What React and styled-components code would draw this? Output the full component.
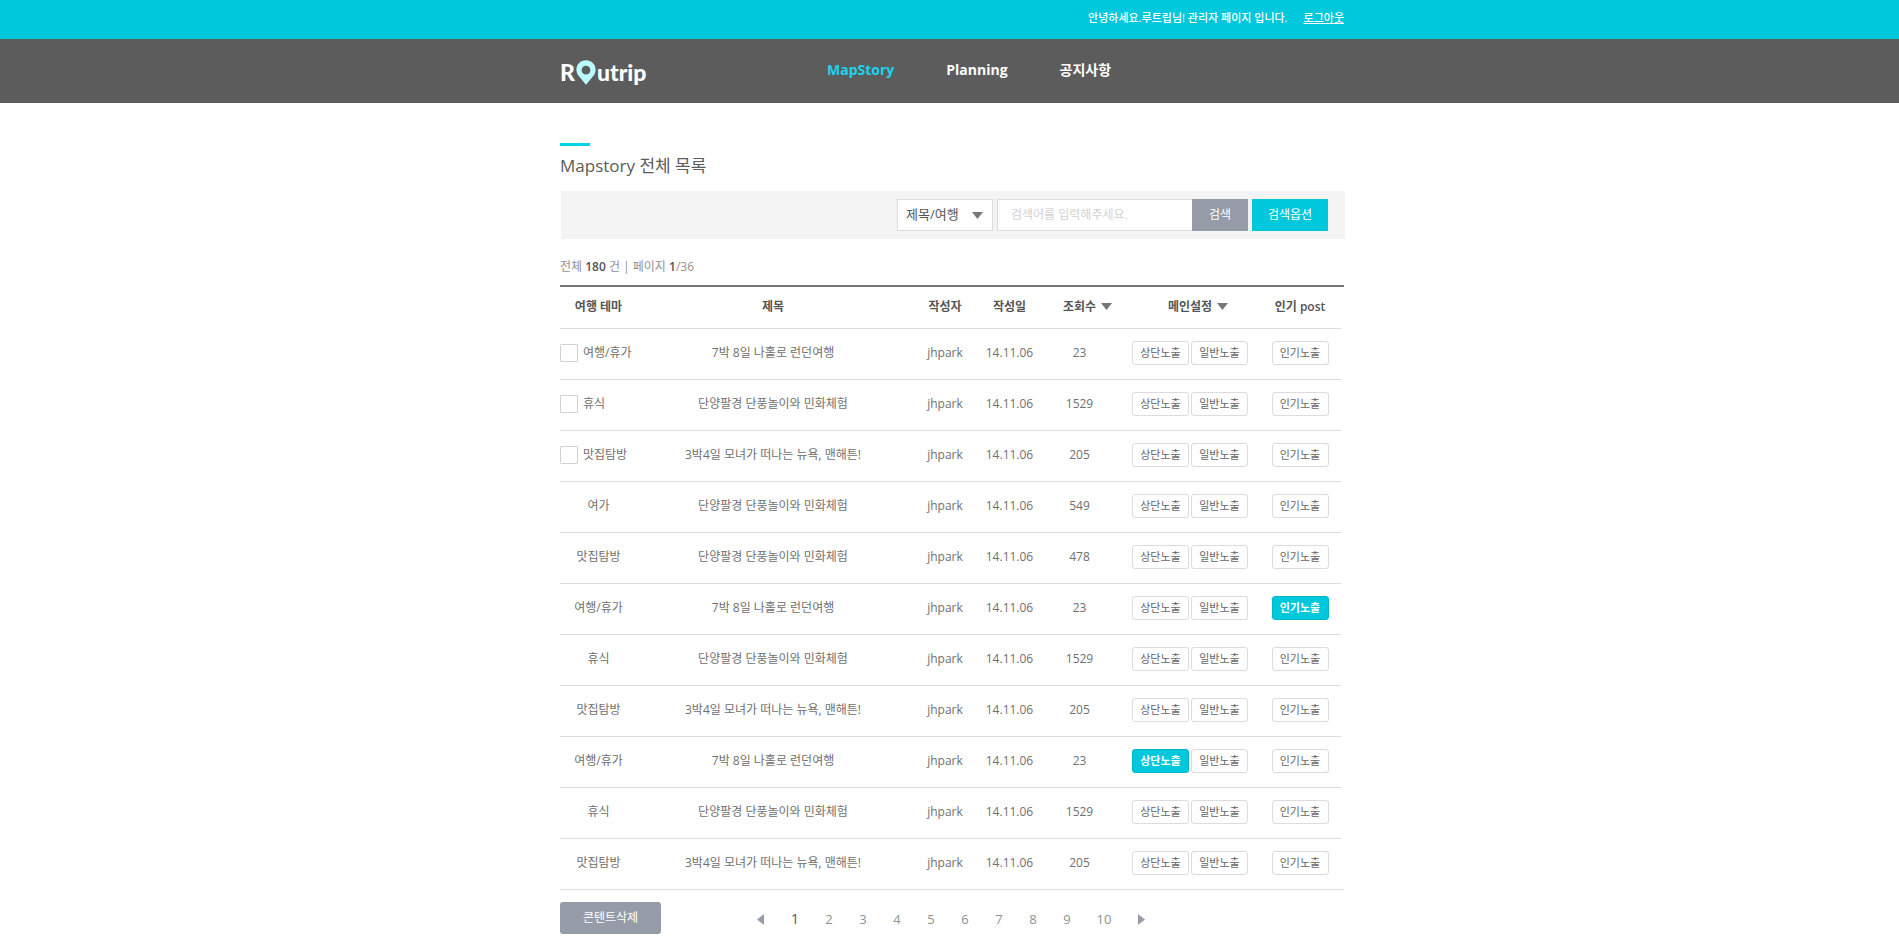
import React, { useState } from 'react';
import styled, { createGlobalStyle, css } from 'styled-components';

const Global = createGlobalStyle`
  *, *::before, *::after { box-sizing: border-box; }
  body {
    margin: 0;
    background: #fff;
    color: #707070;
    font: 12px/18px "Open Sans", "Noto Sans CJK KR", sans-serif;
  }
  button, input, select { font: inherit; margin: 0; }
  a { color: inherit; text-decoration: none; }
`;

const Container = styled.div`
  width: 100%;
  max-width: 791px;
  margin: 0 auto;
  padding-left: 6px;
`;

const TopBar = styled.div`
  background: #00c8dc;
  color: #fff;
`;

const TopBarInner = styled(Container)`
  display: flex;
  justify-content: flex-end;
  align-items: center;
  gap: 16px;
  height: 39px;
  padding-right: 1px;
  padding-bottom: 4px;
  font-size: 11px;
  font-weight: 500;
`;

const Logout = styled.a`
  text-decoration: underline;
`;

const NavBar = styled.header`
  background: #5c5c5c;
`;

const NavInner = styled(Container)`
  display: flex;
  align-items: center;
  height: 64px;
`;

const Logo = styled.a`
  display: flex;
  align-items: center;
  gap: 1px;
  width: 267px;
  color: #fff;
  font: 900 23px/26px Lato, sans-serif;
  padding-top: 2px;
`;

const Nav = styled.nav`
  display: flex;
  gap: 52px;
  padding-bottom: 2px;
  font-size: 14px;
  font-weight: 700;
  line-height: 20px;
`;

const NavLink = styled.a`
  color: ${p => (p.$active ? '#1bd4ee' : '#fff')};
`;

const Title = styled.h1`
  margin: 40px 0 0;
  color: #5c5c5c;
  font-size: 17px;
  font-weight: 400;
  line-height: 24px;

  &::before {
    content: '';
    display: block;
    width: 30px;
    height: 3px;
    margin-bottom: 8px;
    background: #00d2e6;
  }
`;

const SearchBar = styled.form`
  display: flex;
  justify-content: flex-end;
  gap: 4px;
  margin: 13px 0 0 1px;
  padding: 8px 17px 8px 8px;
  background: #f4f4f4;
`;

const SelectBox = styled.div`
  display: grid;
  align-items: center;
  width: 96px;

  & > * { grid-area: 1 / 1; }
  & > svg { justify-self: end; margin-right: 10px; pointer-events: none; }
`;

const Select = styled.select`
  appearance: none;
  width: 100%;
  height: 32px;
  padding: 0 24px 2px 8px;
  border: 1px solid #dcdcdc;
  border-radius: 0;
  background: #fff;
  color: #555;
  font-size: 13px;
`;

const SearchField = styled.div`
  display: flex;
  width: 251px;
`;

const SearchInput = styled.input`
  flex: 1;
  min-width: 0;
  height: 32px;
  padding: 0 12px 2px 13px;
  border: 1px solid #dcdcdc;
  border-right: 0;
  border-radius: 0;
  background: #fff;
  color: #555;

  &::placeholder { color: #d2d2d2; opacity: 1; }
`;

const FlatButton = styled.button`
  width: ${p => p.$width}px;
  height: 32px;
  padding: 0;
  border: 0;
  border-radius: ${p => (p.$rounded ? 3 : 0)}px;
  background: ${p => (p.$primary ? '#00c8dc' : '#959ca8')};
  color: #fff;
  cursor: pointer;
`;

const Summary = styled.p`
  margin: 19px 0 9px;
  color: #919191;

  strong { color: #555; font-weight: 600; }
`;

const TableFrame = styled.div`
  margin-right: 1px;
  padding-right: 3px;
  border-top: 2px solid #777;
  border-bottom: 1px solid #dcdcdc;
`;

const Table = styled.table`
  width: 100%;
  border-collapse: separate;
  border-spacing: 0;
  table-layout: fixed;
  text-align: center;
`;

const Col = styled.col`
  width: ${p => (p.$width ? `${p.$width}px` : 'auto')};
`;

const Th = styled.th`
  height: 42px;
  padding: 0 0 2px;
  border-bottom: 1px solid #dcdcdc;
  color: #555;
  font-weight: 600;
  white-space: nowrap;
`;

const SortButton = styled.button`
  display: inline-flex;
  align-items: center;
  gap: 5px;
  padding: 0 0 0 16px;
  border: 0;
  background: none;
  color: inherit;
  cursor: pointer;
`;

const Td = styled.td`
  height: 51px;
  padding: 0 0 2px;
  border-bottom: 1px solid #dcdcdc;
  white-space: nowrap;

  tr:last-child > & { height: 50px; border-bottom: 0; }
`;

const CheckLabel = styled.label`
  display: flex;
  align-items: center;
  gap: 5px;
`;

const Checkbox = styled.input`
  appearance: none;
  width: 18px;
  height: 18px;
  border: 1px solid #d2d2d2;
  border-radius: 1px;
  background: #fff;

  &:checked { background: #00c8dc; }
`;

const Pair = styled.div`
  display: flex;
  justify-content: center;
  gap: 2px;
`;

const Toggle = styled.button`
  width: 57px;
  height: 24px;
  padding: 0 0 1px;
  border: 1px solid #dcdcdc;
  border-radius: 3px;
  background: #fff;
  color: #666;
  font-size: 11px;
  line-height: 16px;
  cursor: pointer;

  ${p => p.$on && css`
    border-color: #00b8cc;
    background: #00c8dc;
    color: #fff;
    font-weight: 700;
  `}
`;

const Footer = styled.div`
  display: flex;
  align-items: center;
  gap: 96px;
  padding: 12px 0 2px;
`;

const Pager = styled.nav`
  display: flex;
  align-items: center;
  gap: 14px;
  padding-top: 2px;
`;

const Pages = styled.div`
  display: flex;
  align-items: baseline;
`;

const PageLink = styled.a`
  width: ${p => (p.$wide ? 40 : 34)}px;
  color: ${p => (p.$current ? '#555' : '#919191')};
  font-size: ${p => (p.$current ? 14 : 13)}px;
  text-align: center;
`;

const ArrowLink = styled.a`
  display: flex;
`;

const DownArrow = () => (
  <svg width="11" height="7" viewBox="0 0 11 7" aria-hidden="true">
    <path d="M0 0h11L5.500 7z" fill="#777" />
  </svg>
);

const SideArrow = ({ next }) => (
  <svg width="7" height="11" viewBox="0 0 7 11" aria-hidden="true">
    <path d={next ? 'M0 0v11l7-5.500z' : 'M7 0v11L0 5.500z'} fill="#959ca8" />
  </svg>
);

const Pin = () => (
  <svg width="20" height="25" viewBox="0 0 20 25" aria-hidden="true">
    <path
      fillRule="evenodd"
      fill="#b9fbff"
      d="M10 0.3C4.600 0.300 0.400 4.400 0.400 9.700c0 2.700 1.200 5 2.800 6.900L10 24.700l6.800-8.100c1.600-1.900 2.800-4.200 2.800-6.900C19.600 4.400 15.400 0.300 10 0.300zM10 5.800a4.400 4.400 0 1 1 0 8.800 4.400 4.400 0 0 1 0-8.800z"
    />
  </svg>
);

const trips = [
  { theme: '여행/휴가', title: '7박 8일 나홀로 런던여행', hits: 23 },
  { theme: '휴식', title: '단양팔경 단풍놀이와 민화체험', hits: 1529 },
  { theme: '맛집탐방', title: '3박4일 모녀가 떠나는 뉴욕, 맨해튼!', hits: 205 },
];
const [london, danyang, newYork] = trips;

const rows = [
  { ...london, check: true },
  { ...danyang, check: true },
  { ...newYork, check: true },
  { ...danyang, theme: '여가', hits: 549 },
  { ...danyang, theme: '맛집탐방', hits: 478 },
  { ...london, popular: true },
  danyang,
  newYork,
  { ...london, top: true },
  danyang,
  newYork,
];

function Row({ row }) {
  const [top, setTop] = useState(!!row.top);
  const [normal, setNormal] = useState(false);
  const [popular, setPopular] = useState(!!row.popular);
  return (
    <tr>
      <Td>
        {row.check ? (
          <CheckLabel>
            <Checkbox type="checkbox" />
            {row.theme}
          </CheckLabel>
        ) : row.theme}
      </Td>
      <Td>{row.title}</Td>
      <Td>jhpark</Td>
      <Td>14.11.06</Td>
      <Td>{row.hits}</Td>
      <Td>
        <Pair>
          <Toggle type="button" $on={top} onClick={() => setTop(!top)}>상단노출</Toggle>
          <Toggle type="button" $on={normal} onClick={() => setNormal(!normal)}>일반노출</Toggle>
        </Pair>
      </Td>
      <Td>
        <Pair>
          <Toggle type="button" $on={popular} onClick={() => setPopular(!popular)}>인기노출</Toggle>
        </Pair>
      </Td>
    </tr>
  );
}

export default function App() {
  return (
    <>
      <Global />
      <TopBar>
        <TopBarInner>
          <span>안녕하세요.루트립님! 관리자 페이지 입니다.</span>
          <Logout href="#logout">로그아웃</Logout>
        </TopBarInner>
      </TopBar>
      <NavBar>
        <NavInner>
          <Logo href="#home">
            <span>R</span>
            <Pin />
            <span>utrip</span>
          </Logo>
          <Nav>
            <NavLink href="#mapstory" $active>MapStory</NavLink>
            <NavLink href="#planning">Planning</NavLink>
            <NavLink href="#notice">공지사항</NavLink>
          </Nav>
        </NavInner>
      </NavBar>
      <Container as="main">
        <Title>Mapstory 전체 목록</Title>
        <SearchBar onSubmit={e => e.preventDefault()}>
          <SelectBox>
            <Select aria-label="검색 구분">
              <option>제목/여행</option>
            </Select>
            <DownArrow />
          </SelectBox>
          <SearchField>
            <SearchInput type="text" aria-label="검색어" placeholder="검색어를 입력해주세요." />
            <FlatButton type="submit" $width={56}>검색</FlatButton>
          </SearchField>
          <FlatButton type="button" $primary $width={76}>검색옵션</FlatButton>
        </SearchBar>
        <Summary>전체 <strong>180</strong> 건 | 페이지 <strong>1</strong>/36</Summary>
        <TableFrame>
          <Table>
            <colgroup>
              <Col $width={77} />
              <Col />
              <Col $width={72} />
              <Col $width={57} />
              <Col $width={83} />
              <Col $width={138} />
              <Col $width={82} />
            </colgroup>
            <thead>
              <tr>
                <Th scope="col">여행 테마</Th>
                <Th scope="col">제목</Th>
                <Th scope="col">작성자</Th>
                <Th scope="col">작성일</Th>
                <Th scope="col"><SortButton type="button">조회수<DownArrow /></SortButton></Th>
                <Th scope="col"><SortButton type="button">메인설정<DownArrow /></SortButton></Th>
                <Th scope="col">인기 post</Th>
              </tr>
            </thead>
            <tbody>
              {rows.map((row, i) => <Row key={i} row={row} />)}
            </tbody>
          </Table>
        </TableFrame>
        <Footer>
          <FlatButton type="button" $rounded $width={101}>콘텐트삭제</FlatButton>
          <Pager aria-label="페이지">
            <ArrowLink href="#prev" aria-label="이전"><SideArrow /></ArrowLink>
            <Pages>
              {[1, 2, 3, 4, 5, 6, 7, 8, 9, 10].map(n => (
                <PageLink key={n} href={`#page-${n}`} $current={n === 1} $wide={n > 9}>{n}</PageLink>
              ))}
            </Pages>
            <ArrowLink href="#next" aria-label="다음"><SideArrow next /></ArrowLink>
          </Pager>
        </Footer>
      </Container>
    </>
  );
}
